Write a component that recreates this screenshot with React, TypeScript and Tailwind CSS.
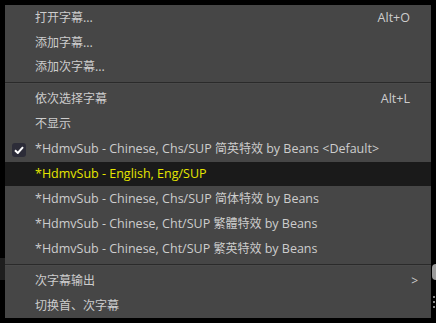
import React from "react";

type Item =
  | { kind: "sep" }
  | { kind: "item"; label: string; shortcut?: string; checked?: boolean; active?: boolean; sub?: boolean };

const items: Item[] = [
  { kind: "item", label: "打开字幕...", shortcut: "Alt+O" },
  { kind: "item", label: "添加字幕..." },
  { kind: "item", label: "添加次字幕..." },
  { kind: "sep" },
  { kind: "item", label: "依次选择字幕", shortcut: "Alt+L" },
  { kind: "item", label: "不显示" },
  { kind: "item", label: "*HdmvSub - Chinese, Chs/SUP 简英特效 by Beans <Default>", checked: true },
  { kind: "item", label: "*HdmvSub - English, Eng/SUP", active: true },
  { kind: "item", label: "*HdmvSub - Chinese, Chs/SUP 简体特效 by Beans" },
  { kind: "item", label: "*HdmvSub - Chinese, Cht/SUP 繁體特效 by Beans" },
  { kind: "item", label: "*HdmvSub - Chinese, Cht/SUP 繁英特效 by Beans" },
  { kind: "sep" },
  { kind: "item", label: "次字幕输出", sub: true },
  { kind: "item", label: "切换首、次字幕" },
];

function Label({ text }: { text: string }) {
  const parts = text.split(/([\u3000-\u9fff\uff00-\uffef]+)/).filter((p) => p.length > 0);
  return (
    <>
      {parts.map((p, i) =>
        /[\u3000-\u9fff\uff00-\uffef]/.test(p) ? (
          <span key={i} className="text-[12px]">{p}</span>
        ) : (
          <span key={i} className="text-[12.5px]">{p}</span>
        )
      )}
    </>
  );
}

export default function App() {
  return (
    <div
      className="relative w-[436px] h-[323px] bg-black overflow-hidden"
      style={{ fontFamily: '"Open Sans", "Noto Sans CJK SC", sans-serif' }}
    >
      <div className="absolute left-0 top-[258px] w-[5px] h-[22px] bg-[#1e1e1e]" />
      <div className="absolute right-0 top-[264px] w-[4px] h-[16px] bg-[#9a9a9a] rounded-l-sm" />
      <div className="absolute right-[1px] top-[296px] flex flex-col gap-[3px]">
        <div className="w-[2px] h-[2px] bg-[#888]" />
        <div className="w-[2px] h-[2px] bg-[#888]" />
        <div className="w-[2px] h-[2px] bg-[#888]" />
      </div>
      <div className="absolute left-[5px] top-[5px] w-[426px] h-[313px] bg-[#464646] flex flex-col">
        {items.map((it, i) =>
          it.kind === "sep" ? (
            <div key={i} className="h-[7px] flex flex-col justify-center">
              <div className="h-[1px] bg-[#2a2a2a]" />
              <div className="h-[1px] bg-[#4a4a4a]" />
            </div>
          ) : (
            <div
              key={i}
              className={`relative h-[25px] flex items-center pl-[30px] pr-[21px] pt-[1px] text-[12.5px] ${
                it.active ? "bg-[#1a1a1a] text-[#e6e600]" : "text-[#cdcdcd]"
              }`}
            >
              {it.checked && (
                <div className="absolute left-[7px] top-[6px] w-[14px] h-[14px] rounded-[3px] bg-[#2c2c38] flex items-center justify-center">
                  <svg width="10" height="8" viewBox="0 0 10 8">
                    <path d="M1 4.2 L3.8 7 L9 1.2" fill="none" stroke="#ffffff" strokeWidth="2" />
                  </svg>
                </div>
              )}
              <span className="flex-1 whitespace-pre">
                <Label text={it.label} />
              </span>
              {it.shortcut && <span>{it.shortcut}</span>}
              {it.sub && <span className="text-[12px] mr-[-8px]">&gt;</span>}
            </div>
          )
        )}
      </div>
    </div>
  );
}
